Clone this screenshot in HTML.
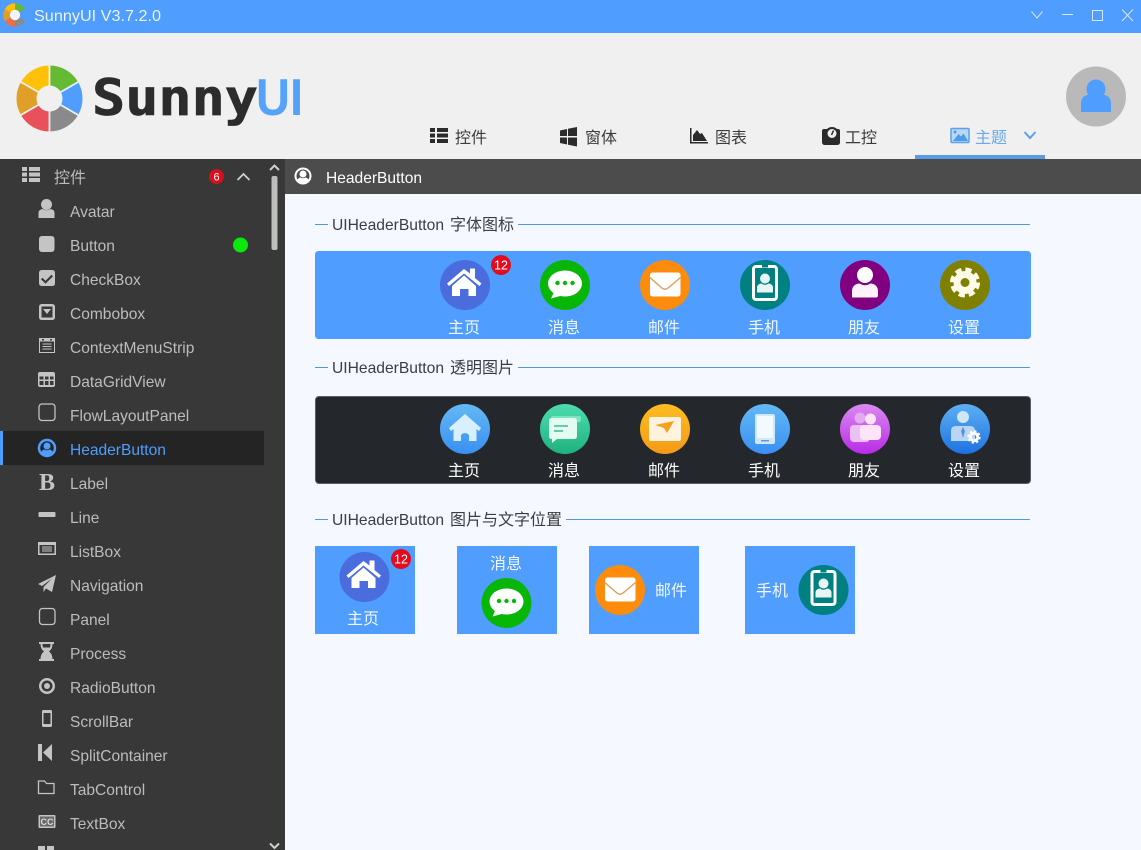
<!DOCTYPE html>
<html lang="zh">
<head>
<meta charset="utf-8">
<title>SunnyUI</title>
<style>
html,body{margin:0;padding:0;background:#f5f9ff;width:1141px;height:850px;overflow:hidden}
svg{display:block;position:absolute;left:0;top:0}
text{font-family:"Liberation Sans","Noto Sans CJK SC",sans-serif;font-size:16px}
.m text{fill:#bcbcbc}
.t{fill:#3a3c3e}
.w{fill:#f2f8ff;text-anchor:middle}
.h{fill:#3a3d42}
.g{fill:#c4c4c4}
</style>
</head>
<body>
<svg width="1141" height="850" viewBox="0 0 1141 850" xmlns="http://www.w3.org/2000/svg">
<defs>
<symbol id="house" viewBox="0 0 50 50" overflow="visible"><path fill="#fff" d="M7 23.500L24 9L30 13.500V8.500H35V18L41.500 23.500L39.500 26L24 13.500L9 26Z"/><path fill="#fff" d="M12 26L24 15.500L36 26V36H28.500V29H20V36H12Z"/></symbol>
<symbol id="chat" viewBox="0 0 50 50" overflow="visible"><ellipse cx="25" cy="23.500" rx="17" ry="13" fill="#fff"/><path fill="#fff" d="M15 30L11 38.500L24 35Z"/><g fill="#08b608"><circle cx="17.500" cy="23" r="2.200"/><circle cx="25" cy="23" r="2.200"/><circle cx="32.500" cy="23" r="2.200"/></g></symbol>
<symbol id="mail" viewBox="0 0 50 50" overflow="visible"><rect x="10" y="12.500" width="30.500" height="24" rx="2.500" fill="#fff"/><path d="M10 17.500Q17 24 22 28Q25 30.500 28 28Q33 24 40.500 17.500" fill="none" stroke="#d9a05f" stroke-width="1.400"/></symbol>
<symbol id="phone" viewBox="0 0 50 50" overflow="visible"><rect x="13.500" y="6.500" width="23" height="33" rx="2.500" fill="none" stroke="#fff" stroke-width="3"/><rect x="22" y="5" width="6" height="2.500" fill="#008080"/><circle cx="25" cy="18.500" r="5" fill="#e9f5f5"/><path fill="#e9f5f5" d="M17 32.500V27.500C17 25 19.500 23.500 21.500 23.500Q25 26 28.500 23.500C30.500 23.500 33 25 33 27.500V32.500Z"/></symbol>
<symbol id="user" viewBox="0 0 50 50" overflow="visible"><circle cx="25" cy="15" r="8" fill="#fff"/><path fill="#fff3fb" d="M12 37.500V31C12 26 16 23.500 19.500 23.500Q25 27 30.500 23.500C34 23.500 38 26 38 31V35.500Q38 37.500 36 37.500Z"/></symbol>
<symbol id="gear" viewBox="0 0 50 50" overflow="visible"><circle cx="25" cy="22.500" r="12.500" fill="none" stroke="#fffbe8" stroke-width="5" stroke-dasharray="6 3.820"/><circle cx="25" cy="22.500" r="8" fill="none" stroke="#fffbe8" stroke-width="7"/></symbol>
<linearGradient id="gb" x1="0" y1="0" x2="0" y2="1"><stop offset="0" stop-color="#63b9f4"/><stop offset="1" stop-color="#3a8ff2"/></linearGradient>
<linearGradient id="gg" x1="0" y1="0" x2="0" y2="1"><stop offset="0" stop-color="#4edcb0"/><stop offset="1" stop-color="#1eb27e"/></linearGradient>
<linearGradient id="go" x1="0" y1="0" x2="0" y2="1"><stop offset="0" stop-color="#fdbd1f"/><stop offset="1" stop-color="#f49a18"/></linearGradient>
<linearGradient id="gp" x1="0" y1="0" x2="0" y2="1"><stop offset="0" stop-color="#d98af0"/><stop offset="1" stop-color="#b92be6"/></linearGradient>
<linearGradient id="gs" x1="0" y1="0" x2="0" y2="1"><stop offset="0" stop-color="#5cb0f4"/><stop offset="1" stop-color="#1f72e0"/></linearGradient>
</defs>

<!-- backgrounds -->
<rect x="0" y="33" width="1141" height="126" fill="#f0f0f0"/>
<rect x="0" y="0" width="1141" height="33" fill="#4f9dff"/>
<rect x="0" y="159" width="285" height="691" fill="#383838"/>
<rect x="285" y="159" width="856" height="35" fill="#4c4c4c"/>
<rect x="285" y="194" width="856" height="656" fill="#f5f9ff"/>

<!-- title bar -->
<g transform="translate(15 15)">
<g fill="none" stroke-width="6.500">
<circle r="8.500" pathLength="6" stroke-dasharray="1 5" stroke="#66b933" transform="rotate(-90)"/>
<circle r="8.500" pathLength="6" stroke-dasharray="1 5" stroke="#4f9dff" transform="rotate(-30)" opacity=".8"/>
<circle r="8.500" pathLength="6" stroke-dasharray="1 5" stroke="#8a8a8a" transform="rotate(30)"/>
<circle r="8.500" pathLength="6" stroke-dasharray="1 5" stroke="#e8714b" transform="rotate(90)"/>
<circle r="8.500" pathLength="6" stroke-dasharray="1 5" stroke="#e09f26" transform="rotate(150)"/>
<circle r="8.500" pathLength="6" stroke-dasharray="1 5" stroke="#ffc107" transform="rotate(210)"/>
</g>
<circle r="5.200" fill="#f4f4f4"/>
</g>
<text x="34" y="21" textLength="127" lengthAdjust="spacingAndGlyphs" style="fill:#eaf3ff">SunnyUI V3.7.2.0</text>
<g fill="none" stroke="#d8e9ff" stroke-width="1">
<path d="M1031.500 11.500L1037 18L1042.500 11.500"/>
<path d="M1062 14.500H1073"/>
<rect x="1092.500" y="10.500" width="10" height="10"/>
<path d="M1122 9.500L1133 21M1133 9.500L1122 21"/>
</g>

<!-- logo -->
<g transform="translate(49.500 98.500)">
<g fill="none" stroke-width="20">
<circle r="23" pathLength="6" stroke-dasharray="1 5" stroke="#66b933" transform="rotate(-90)"/>
<circle r="23" pathLength="6" stroke-dasharray="1 5" stroke="#4f9dff" transform="rotate(-30)"/>
<circle r="23" pathLength="6" stroke-dasharray="1 5" stroke="#8a8a8a" transform="rotate(30)"/>
<circle r="23" pathLength="6" stroke-dasharray="1 5" stroke="#e8505b" transform="rotate(90)"/>
<circle r="23" pathLength="6" stroke-dasharray="1 5" stroke="#e09f26" transform="rotate(150)"/>
<circle r="23" pathLength="6" stroke-dasharray="1 5" stroke="#ffc107" transform="rotate(210)"/>
</g>
<path d="M0-34V34M-29.500-17L29.500 17M-29.500 17L29.500-17" stroke="#f0f0f0" stroke-width="1.800"/>
</g>
<text x="92" y="115" textLength="166" lengthAdjust="spacingAndGlyphs" style="font-family:'DejaVu Sans Mono','Liberation Mono',monospace;font-weight:bold;font-size:50px;fill:#2c2c2c;stroke:#2c2c2c;stroke-width:.7;stroke-linejoin:miter">Sunny</text>
<text x="256" y="115" textLength="47" lengthAdjust="spacingAndGlyphs" style="font-weight:bold;font-size:52px;fill:#55a2fb">UI</text>

<!-- avatar -->
<ellipse cx="1096" cy="96.500" rx="30" ry="30" fill="#b9b9b9"/>
<circle cx="1096" cy="89" r="9.500" fill="#4f9dff"/>
<path fill="#4f9dff" d="M1081 112V103C1081 97 1086 95 1089 94.500Q1096 100 1103 94.500C1106 95 1111 97 1111 103V112Z"/>

<!-- tabs -->
<g fill="#2b2b2b">
<path d="M430 128h5v4h-5zM437 128h11v4h-11zM430 133.500h5v4h-5zM437 133.500h11v4h-11zM430 139h5v4h-5zM437 139h11v4h-11z"/>
<path d="M560 130.500l7-1.500v7h-7zM568 128.800l9-1.800v9h-9zM560 137.500h7v7l-7-1.500zM568 137.500h9v9l-9-1.800z"/>
<path d="M690 128h1.500v14H708v1.500H690z"/><path d="M693 141V135L697 130L700 134L702 133L707 141Z"/>
<path d="M822 131q0-2 2-2h3q2-2 5-2t5 2h1q2 0 2 2v11q0 3-3 3h-12q-3 0-3-3z"/>
</g>
<circle cx="832" cy="133.500" r="4.500" fill="#f0f0f0"/><path d="M833.500 130.500L831.500 135" stroke="#2b2b2b" stroke-width="1.500"/>
<text x="455" y="143" class="t">控件</text>
<text x="585" y="143" class="t">窗体</text>
<text x="715" y="143" class="t">图表</text>
<text x="845" y="143" class="t">工控</text>
<rect x="951" y="128.500" width="18" height="14" rx="1" fill="#b8d8f4" stroke="#5ba0e8" stroke-width="1.500"/>
<path d="M953 141L958.500 134L961 136.500L963.500 133.500L968 141Z" fill="#4f9bea"/><circle cx="955" cy="132" r="1.500" fill="#4f9bea"/>
<text x="975" y="143" style="fill:#6aa9ea">主题</text>
<path d="M1024.500 132L1030 138L1035.500 132" fill="none" stroke="#5ba0e8" stroke-width="2"/>
<rect x="915" y="155" width="130" height="4" fill="#5b9be6"/>

<!-- sidebar selected -->
<rect x="3" y="431" width="261" height="34" fill="#242424"/>
<rect x="0" y="431" width="3" height="34" fill="#4f9dff"/>

<!-- sidebar header -->
<path class="g" d="M22 167h5v4h-5zM29 167h11v4h-11zM22 172.500h5v4h-5zM29 172.500h11v4h-11zM22 178h5v4h-5zM29 178h11v4h-11z"/>
<g class="m"><text x="54" y="183">控件</text></g>
<g class="m" transform="translate(70 0) scale(.972 1)">
<text x="0" y="217">Avatar</text>
<text x="0" y="251">Button</text>
<text x="0" y="285">CheckBox</text>
<text x="0" y="319">Combobox</text>
<text x="0" y="353">ContextMenuStrip</text>
<text x="0" y="387">DataGridView</text>
<text x="0" y="421">FlowLayoutPanel</text>
<text x="0" y="455" style="fill:#4f9dff">HeaderButton</text>
<text x="0" y="489">Label</text>
<text x="0" y="523">Line</text>
<text x="0" y="557">ListBox</text>
<text x="0" y="591">Navigation</text>
<text x="0" y="625">Panel</text>
<text x="0" y="659">Process</text>
<text x="0" y="693">RadioButton</text>
<text x="0" y="727">ScrollBar</text>
<text x="0" y="761">SplitContainer</text>
<text x="0" y="795">TabControl</text>
<text x="0" y="829">TextBox</text>
</g>
<circle cx="216.500" cy="176.500" r="7.500" fill="#d8101c"/>
<text x="216.500" y="180.500" text-anchor="middle" style="font-size:11px;fill:#fff">6</text>
<path d="M237.500 180L243.500 174L249.500 180" fill="none" stroke="#d0d0d0" stroke-width="1.800"/>
<path d="M270 170L274.500 165.500L279 170" fill="none" stroke="#d0d0d0" stroke-width="2"/>
<rect x="271.500" y="176" width="6" height="74" rx="2" fill="#bdbdbd"/>
<path d="M270 843.500L274.500 848L279 843.500" fill="none" stroke="#d0d0d0" stroke-width="2"/>
<circle cx="240.500" cy="245" r="7.500" fill="#0be80b"/>

<!-- sidebar icons -->
<g class="g">
<circle cx="46.500" cy="204.500" r="5.500"/>
<path d="M38.500 218v-5q0-3.500 4-4 4 2.500 8 0 4 .5 4 4v5z"/>
<rect x="39" y="236" width="15.500" height="16" rx="3"/>
<path fill-rule="evenodd" d="M42 270h10q3 0 3 3v10q0 3-3 3H42q-3 0-3-3v-10q0-3 3-3zM45.500 280.800l-3-3-1.500 1.500 4.500 4.500 7.500-7.500-1.500-1.500z"/>
<path fill-rule="evenodd" d="M42 304h10q3 0 3 3v10q0 3-3 3H42q-3 0-3-3v-10q0-3 3-3zM41.500 306.500v11h11v-11zM43 309h8l-4 5z"/>
<path fill-rule="evenodd" d="M39 338h16v15H39zM40 341.500v10.500h14v-10.500zM42 339v1.500h2V339zM50 339v1.500h2V339z"/>
<path d="M42.500 343.500h9v1h-9zM42.500 346h9v1h-9zM42.500 348.500h9v1h-9z"/>
<path fill-rule="evenodd" d="M40 372h13q2 0 2 2v11q0 2-2 2H40q-2 0-2-2v-11q0-2 2-2zM39.500 376.500v3h4v-3zM45 376.500v3h3.500v-3zM50 376.500v3h3.500v-3zM39.500 381v4h4v-4zM45 381v4h3.500v-4zM50 381v4h3.500v-4z"/>
<rect x="38.500" y="512" width="17" height="5" rx="1"/>
<path fill-rule="evenodd" d="M38 542h18v13H38zM39.500 545v8.500h15V545z"/>
<path d="M42 546.500h10v1H42zM42 548.500h10v1H42zM42 550.500h10v1H42z"/>
<path d="M56 575L52 592L46 588.500L43.500 592V587L52 578.500L42 586L38 584Z"/>
<path d="M39 642h15v2h-1.500q0 5-3.500 7.500 3.500 2.500 3.500 7.500H54v2H39v-2h1.500q0-5 3.500-7.500-3.500-2.500-3.500-7.500H39zM42.500 644q0 2 .5 3.500h7q.5-1.500.5-3.500z"/>
<path fill-rule="evenodd" d="M47 678a8 8 0 1 1 0 16a8 8 0 0 1 0-16zM47 680.500a5.500 5.500 0 1 0 0 11a5.500 5.500 0 0 0 0-11z"/>
<circle cx="47" cy="686" r="3"/>
<path fill-rule="evenodd" d="M43.500 710h7q1.500 0 1.500 1.500v14q0 1.500-1.500 1.500h-7q-1.500 0-1.500-1.500v-14q0-1.500 1.500-1.500zM43.500 713v11h7v-11z"/>
<path d="M38 744h4v17h-4zM43 752.500L52 744V761Z"/>
<path d="M38 846h7v4h-7zM47 846h7v4h-7z"/>
<rect x="38.500" y="815" width="17" height="13" rx="1"/>
</g>
<rect x="40" y="816.500" width="14" height="10" fill="#6a6a6a"/>
<text x="47" y="825" text-anchor="middle" style="font-size:9px;font-weight:bold;fill:#dcdcdc">CC</text>
<g fill="none" stroke="#c4c4c4" stroke-width="1.300">
<rect x="39" y="404" width="16" height="16.500" rx="3"/>
<rect x="39.500" y="608.500" width="15.500" height="16" rx="3"/>
<path d="M38.500 781h6l2 2.500H54v10H38.500z"/>
</g>
<text x="47" y="490" text-anchor="middle" style="font-family:'Liberation Serif',serif;font-size:24px;font-weight:bold;fill:#c4c4c4">B</text>
<circle cx="47" cy="448" r="8" fill="none" stroke="#4f9dff" stroke-width="2.500"/>
<circle cx="47" cy="446" r="3.500" fill="#4f9dff"/><path d="M40.500 453q2-3.500 4-3.500 2.500 1.500 5 0 2 0 4 3.500-6.500 5.500-13 0z" fill="#4f9dff"/>

<!-- content title -->
<circle cx="303" cy="176" r="7.500" fill="none" stroke="#fff" stroke-width="2"/>
<circle cx="303" cy="174" r="3.500" fill="#fff"/><path d="M296.500 181q2-3.500 4-3.500 2.500 1.500 5 0 2 0 4 3.500-6.500 5.500-13 0z" fill="#fff"/>
<text x="326" y="183" textLength="96" lengthAdjust="spacingAndGlyphs" style="fill:#fff">HeaderButton</text>

<!-- section 1 -->
<path d="M315 224.500H328M518 224.500H1030" stroke="#4f9bd8" stroke-width="1"/>
<text x="332" y="230" class="h" textLength="112" lengthAdjust="spacingAndGlyphs">UIHeaderButton</text>
<text x="450" y="230" class="h">字体图标</text>
<rect x="315" y="251" width="716" height="88" rx="3.500" fill="#4f9dff"/>
<circle cx="465" cy="285" r="25" fill="#4a6cdc"/><use href="#house" x="440" y="260" width="50" height="50"/>
<circle cx="565" cy="285" r="25" fill="#08b608"/><use href="#chat" x="540" y="260" width="50" height="50"/>
<circle cx="665" cy="285" r="25" fill="#fd8c0c"/><use href="#mail" x="640" y="260" width="50" height="50"/>
<circle cx="765" cy="285" r="25" fill="#008080"/><use href="#phone" x="740" y="260" width="50" height="50"/>
<circle cx="865" cy="285" r="25" fill="#800080"/><use href="#user" x="840" y="260" width="50" height="50"/>
<circle cx="965" cy="285" r="25" fill="#808000"/><use href="#gear" x="940" y="260" width="50" height="50"/>
<circle cx="501" cy="265" r="10" fill="#e30c1e"/>
<text x="501" y="269.500" text-anchor="middle" style="font-size:12.500px;fill:#fff">12</text>
<text x="464" y="333" class="w">主页</text><text x="564" y="333" class="w">消息</text><text x="664" y="333" class="w">邮件</text><text x="764" y="333" class="w">手机</text><text x="864" y="333" class="w">朋友</text><text x="964" y="333" class="w">设置</text>

<!-- section 2 -->
<path d="M315 367.500H328M518 367.500H1030" stroke="#4f9bd8" stroke-width="1"/>
<text x="332" y="373" class="h" textLength="112" lengthAdjust="spacingAndGlyphs">UIHeaderButton</text>
<text x="450" y="373" class="h">透明图片</text>
<rect x="315.500" y="396.500" width="715" height="87" rx="3.500" fill="#24272b" stroke="#5a5f66"/>
<circle cx="465" cy="429" r="25" fill="url(#gb)"/>
<path fill="#d8effd" d="M449 428L465 414L481 428L479 431L476.500 429V441H469V435Q465 431 461 435V441H453.500V429L451 431Z"/>
<circle cx="565" cy="429" r="25" fill="url(#gg)"/>
<rect x="551" y="416" width="30" height="6" rx="2" fill="#79e6c4"/>
<path fill="#e4fbf2" d="M549 421q0-3 3-3h22q3 0 3 3v15q0 3-3 3h-17l-5 4v-4q-3 0-3-3z"/>
<path d="M554 426h14M554 431h9" stroke="#3fb98f" stroke-width="1.500"/>
<circle cx="665" cy="429" r="25" fill="url(#go)"/>
<rect x="649" y="417" width="32" height="24" rx="2" fill="#fff3e0"/>
<path d="M655 425L674 421L667 433L664 428Z" fill="#f5a11e"/>
<circle cx="765" cy="429" r="25" fill="url(#gb)"/>
<rect x="755" y="414" width="20" height="30" rx="2" fill="#cfe9fb"/><rect x="757" y="416" width="16" height="22" fill="#f3faff"/><rect x="761" y="440" width="8" height="1.500" fill="#5d9ed8"/>
<circle cx="865" cy="429" r="25" fill="url(#gp)"/>
<circle cx="860" cy="418" r="5.500" fill="#e3aaf2"/><rect x="850" y="425" width="20" height="17" rx="4" fill="#eac0f5"/>
<circle cx="870.500" cy="419" r="5.500" fill="#fbe3fb"/><rect x="860" y="425" width="21" height="15" rx="4" fill="#fde4f8"/>
<circle cx="965" cy="429" r="25" fill="url(#gs)"/>
<circle cx="963" cy="417" r="6" fill="#cfe6fb"/>
<path fill="#b9d6f4" d="M951 441V431q0-5 5-5h14q5 0 5 5v10z"/>
<path d="M963 427L961 431L963 438L965 431Z" fill="#5b94d8"/>
<circle cx="974" cy="437" r="3.800" fill="none" stroke="#fff" stroke-width="3"/>
<circle cx="974" cy="437" r="5.800" fill="none" stroke="#fff" stroke-width="1.800" stroke-dasharray="2.300 2.250"/>
<text x="464" y="476" style="fill:#fff;text-anchor:middle">主页</text><text x="564" y="476" style="fill:#fff;text-anchor:middle">消息</text><text x="664" y="476" style="fill:#fff;text-anchor:middle">邮件</text><text x="764" y="476" style="fill:#fff;text-anchor:middle">手机</text><text x="864" y="476" style="fill:#fff;text-anchor:middle">朋友</text><text x="964" y="476" style="fill:#fff;text-anchor:middle">设置</text>

<!-- section 3 -->
<path d="M315 519.500H328M566 519.500H1030" stroke="#4f9bd8" stroke-width="1"/>
<text x="332" y="525" class="h" textLength="112" lengthAdjust="spacingAndGlyphs">UIHeaderButton</text>
<text x="450" y="525" class="h">图片与文字位置</text>
<rect x="315" y="546" width="100" height="88" fill="#4f9dff"/>
<rect x="457" y="546" width="100" height="88" fill="#4f9dff"/>
<rect x="589" y="546" width="110" height="88" fill="#4f9dff"/>
<rect x="745" y="546" width="110" height="88" fill="#4f9dff"/>
<circle cx="364.500" cy="577" r="25" fill="#4a6cdc"/><use href="#house" x="339.500" y="552" width="50" height="50"/>
<circle cx="401" cy="559" r="10" fill="#e30c1e"/>
<text x="401" y="563.500" text-anchor="middle" style="font-size:12.500px;fill:#fff">12</text>
<text x="363" y="624" class="w">主页</text>
<text x="506" y="569" class="w">消息</text>
<circle cx="506.500" cy="603" r="25" fill="#08b608"/><use href="#chat" x="481.500" y="578" width="50" height="50"/>
<circle cx="620" cy="590" r="25" fill="#fd8c0c"/><use href="#mail" x="595" y="565" width="50" height="50"/>
<text x="671" y="596" class="w">邮件</text>
<text x="772" y="596" class="w">手机</text>
<circle cx="823.500" cy="590" r="25" fill="#008080"/><use href="#phone" x="798.500" y="565" width="50" height="50"/>
</svg>
</body>
</html>
